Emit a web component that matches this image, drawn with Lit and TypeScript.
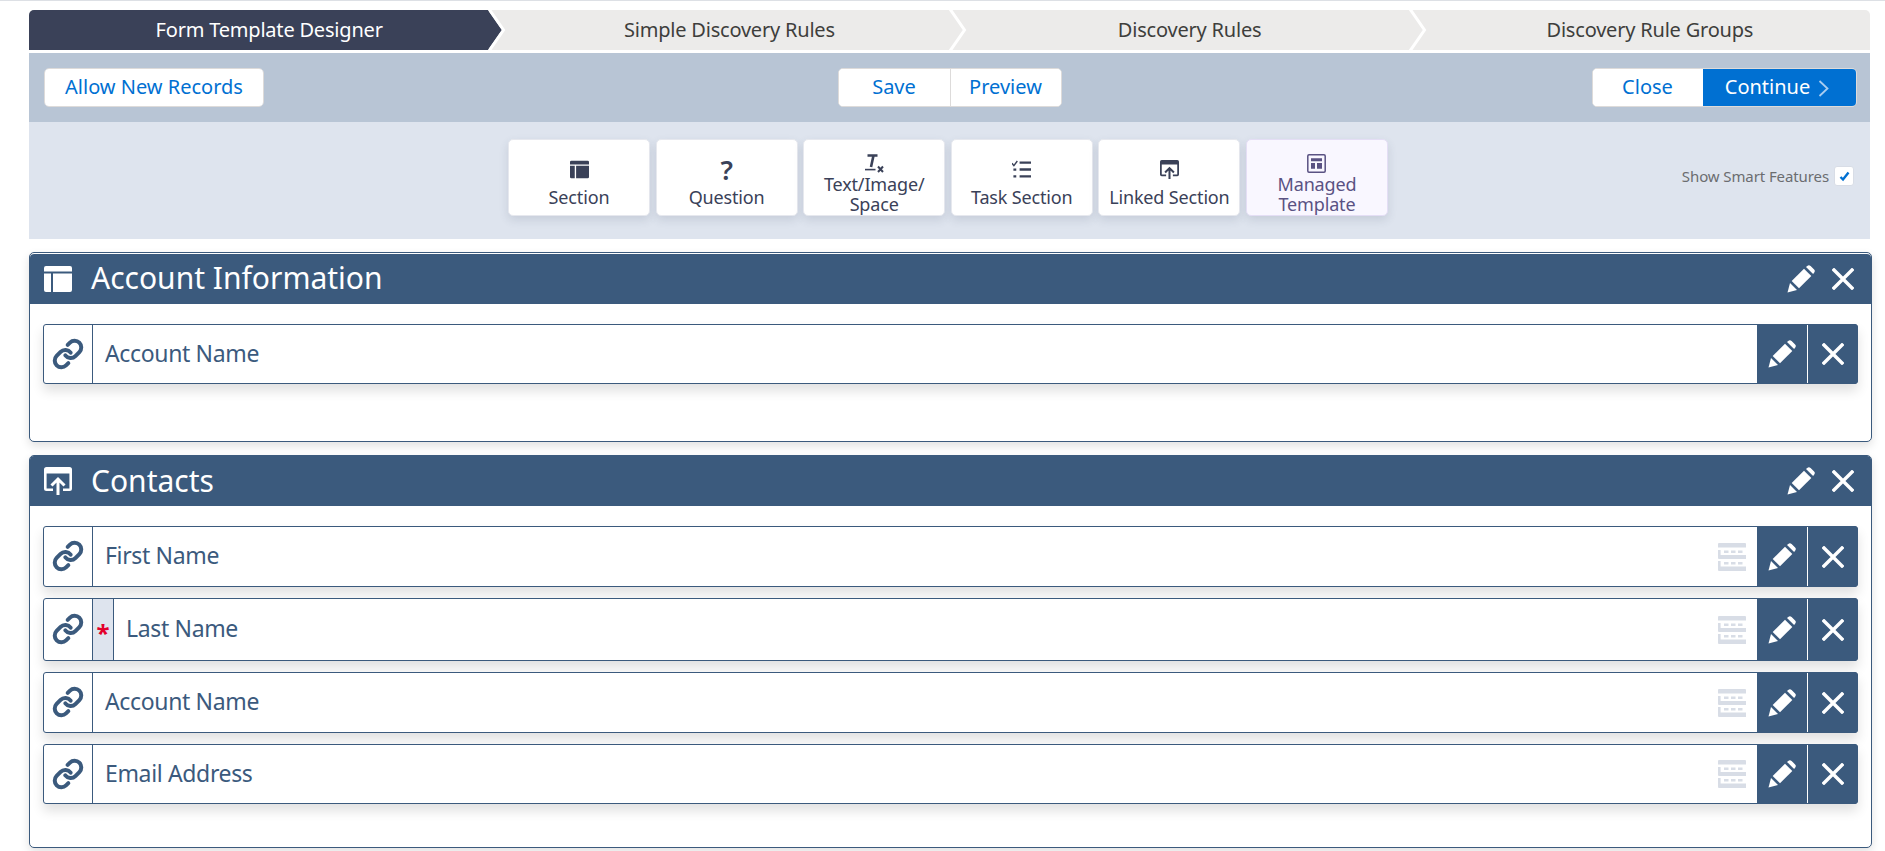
import { LitElement, html, css, svg } from "lit";
import { customElement } from "lit/decorators.js";

const sectionIcon = svg`<path d="M2 0h24a2 2 0 0 1 2 2v3.5H0V2a2 2 0 0 1 2-2zM0 7.5h7V26H2a2 2 0 0 1-2-2zM9 7.5h19V24a2 2 0 0 1-2 2H9z" fill="currentColor"/>`;
const linkedIcon = svg`<path d="M2.5 0h23A2.5 2.5 0 0 1 28 2.5v19a2.5 2.5 0 0 1-2.5 2.5H19v-2.6h6.4V6.5H2.6v14.9H9V24H2.5A2.5 2.5 0 0 1 0 21.5v-19A2.5 2.5 0 0 1 2.5 0z" fill="currentColor"/><path d="M14 28V12.5M7.5 18.5 14 12l6.5 6.5" fill="none" stroke="currentColor" stroke-width="3"/>`;

const pencil = html`<svg class="pencil" viewBox="0 0 28 28"><path d="M.5 27.5 3 18l7 7z" fill="currentColor"/><path d="M4.7 16 17 3.7 24.3 11 12 23.3z" fill="currentColor"/><path d="M19 1.9l1.2-1a2.6 2.6 0 0 1 3.4 0l3.5 3.5a2.6 2.6 0 0 1 0 3.4l-1 1.2z" fill="currentColor"/></svg>`;
const cross = html`<svg class="cross" viewBox="0 0 22 22"><path d="M2 2l18 18M20 2 2 20" stroke="currentColor" stroke-width="3.4" stroke-linecap="square" fill="none"/></svg>`;
const link = html`<svg class="link" viewBox="0 0 24 24"><path d="M10 13a5 5 0 0 0 7.54.54l3-3a5 5 0 0 0-7.07-7.07l-1.72 1.71" /><path d="M14 11a5 5 0 0 0-7.54-.54l-3 3a5 5 0 0 0 7.07 7.07l1.71-1.71"/></svg>`;
const tableIcon = html`<svg class="grid" viewBox="0 0 28 28"><path fill="currentColor" d="M1 0h26a1 1 0 0 1 1 1v3.5H0V1a1 1 0 0 1 1-1zM0 7h2.6v5H28v4H1a1 1 0 0 1-1-1zM0 18h2.6v5.5H28V28H1a1 1 0 0 1-1-1zM6 7.5h4.5v2.6H6zM13 7.5h4.5v2.6H13zM20 7.5h4.5v2.6H20zM6 19h4.5v2.6H6zM13 19h4.5v2.6H13zM20 19h4.5v2.6H20z"/></svg>`;
const chevron = html`<svg class="chev" viewBox="0 0 18 40" preserveAspectRatio="none"><path d="M1 -1 15.5 20 1 41" fill="none" stroke="#fff" stroke-width="3"/></svg>`;

const tiles = [
  { label: ["Section"], icon: html`<svg class="ti" viewBox="0 0 28 26">${sectionIcon}</svg>` },
  { label: ["Question"], icon: html`<span class="q">?</span>` },
  {
    label: ["Text/Image/", "Space"],
    icon: html`<svg class="ti" viewBox="0 0 19 19"><path d="M2.5 1.5h10M8.5 1.5 6 13" fill="none" stroke="currentColor" stroke-width="2.6"/><path d="M0 15.6h10.5" stroke="currentColor" stroke-width="1.6"/><path d="M13 12.5l5 5.5M18 12.5l-5 5.5" stroke="currentColor" stroke-width="2"/></svg>`,
  },
  {
    label: ["Task Section"],
    icon: html`<svg class="ti" viewBox="0 0 20 19"><path d="M0 3l2 2.4L5.6.6" fill="none" stroke="currentColor" stroke-width="1.5"/><path d="M8 2.2h12M8 9.5h12M8 16.7h12" stroke="currentColor" stroke-width="2.4"/><path d="M1.5 8.4h3v2.4h-3zM1.5 15.6h3V18h-3z" fill="currentColor"/></svg>`,
  },
  { label: ["Linked Section"], icon: html`<svg class="ti" viewBox="0 0 28 28">${linkedIcon}</svg>` },
  {
    label: ["Managed", "Template"],
    managed: true,
    icon: html`<svg class="ti" viewBox="0 0 19 19"><rect x=".8" y=".8" width="17.4" height="17.4" rx="1.2" fill="none" stroke="currentColor" stroke-width="1.5"/><path d="M4 4.2h11v3H4zM4 9h4v5.8H4zM10 9h5v5.8h-5z" fill="currentColor"/></svg>`,
  },
];

const tabs = ["Form Template Designer", "Simple Discovery Rules", "Discovery Rules", "Discovery Rule Groups"];

@customElement("app-root")
export class AppRoot extends LitElement {
  static styles = css`
    :host {
      display: block;
      width: 1885px;
      height: 851px;
      overflow: hidden;
      background: #fff;
      font-family: "Noto Sans", sans-serif;
      box-sizing: border-box;
      border-top: 1px solid #dde0e5;
    }
    * { box-sizing: border-box; }
    .page { padding: 9px 13px 0 29px; }
    .wrap { margin-right: 2px; }

    .tabs { display: flex; height: 40px; background: #ecebea; border-radius: 5px 5px 0 0; }
    .tab {
      position: relative;
      flex: 1 1 0;
      display: flex;
      align-items: center;
      justify-content: center;
      padding: 0 0 2px 20px;
      font-size: 20px;
      letter-spacing: -0.2px;
      color: #3e3e3c;
    }
    .tab.active { background: #3a4158; color: #fff; border-top-left-radius: 5px; }
    .chev { position: absolute; left: 100%; top: 0; width: 18px; height: 40px; margin-left: -1px; z-index: 1; }
    .tip { position: absolute; left: 100%; top: 0; width: 14px; height: 40px; margin-left: -1px; }

    .bar {
      margin-top: 3px;
      height: 69px;
      padding: 15px;
      background: #b8c5d5;
      display: grid;
      grid-template-columns: 1fr auto 1fr;
      align-items: start;
    }
    .group { display: inline-flex; border: 1px solid #dddbda; border-radius: 5px; overflow: hidden; background: #fff; height: 39px; }
    .group.right { justify-self: end; margin-right: -1.5px; }
    .btn {
      display: flex;
      align-items: center;
      justify-content: center;
      padding-bottom: 2px;
      font-size: 20px;
      color: #0070d2;
      background: #fff;
    }
    .btn + .btn { border-left: 1px solid #dddbda; }
    .allow { width: 218px; }
    .save { width: 111px; }
    .preview { width: 111px; }
    .close { width: 110px; }
    .continue { width: 153px; background: #0070d2; color: #fff; gap: 8px; padding-right: 4px; border-left: 0 !important; }
    .continue svg { width: 11px; height: 17px; margin-top: 4px; }

    .tools { height: 117px; background: #dee4ee; display: flex; align-items: flex-start; padding: 17px 16px 0 479px; }
    .tile-row { display: flex; gap: 5.6px; }
    .tile {
      width: 142px;
      height: 77px;
      padding-top: 12px;
      background: #fff;
      border: 1px solid #e6e8ee;
      border-radius: 5px;
      box-shadow: 0 4px 10px rgba(60, 70, 100, 0.14);
      color: #3a4158;
      display: flex;
      flex-direction: column;
      align-items: center;
      justify-content: center;
      font-size: 18px;
      line-height: 20px;
      letter-spacing: -0.15px;
      text-align: center;
    }
    .tile.managed { background: #f9f7ff; border-color: #e4def5; color: #5a5283; }
    .ti { width: 19px; height: 19px; display: block; margin-bottom: 8px; flex: none; }
    .q { display: block; width: 19px; height: 19px; line-height: 19px; font-size: 27px; font-weight: 600; margin-bottom: 8px; }
    .tile.two .ti { margin-bottom: 1px; }
    .smart { margin-left: auto; margin-top: 27px; display: flex; align-items: center; gap: 5px; font-size: 15px; letter-spacing: -0.1px; color: #6b6d70; height: 20px; }
    .check { width: 20px; height: 20px; background: #fff; border: 1px solid #d8dde6; border-radius: 3px; display: flex; align-items: center; justify-content: center; }
    .check svg { width: 11px; height: 11px; }

    .panel { margin-top: 13px; border: 1px solid #3b5a7d; border-radius: 5px; background: #fff; box-shadow: 0 4px 10px rgba(0, 0, 0, 0.12); }
    .panel.one { height: 190px; }
    .panel.two { height: 393px; }
    .head { height: 50px; background: #3b5a7d; color: #fff; display: flex; align-items: center; padding: 0 17px 0 14px; border-radius: 4px 4px 0 0; }
    .panel.one .head { margin-top: 1px; }
    .head .hi { width: 28px; height: 28px; margin-right: 19px; flex: none; }
    .head h2 { margin: 0 0 3px; flex: 1; font-weight: 400; font-size: 30px; line-height: 1; }
    .panel.two .head h2 { margin-bottom: 1px; }
    .head .pencil { margin-right: 17px; }
    .pencil { width: 28px; height: 28px; display: block; }
    .cross { width: 22px; height: 22px; display: block; }
    .body { padding: 20px 13px 0; display: flex; flex-direction: column; gap: 11px; }

    .row {
      display: flex;
      align-items: stretch;
      border: 1px solid #3b5a7d;
      border-radius: 3px;
      background: #fff;
      box-shadow: 0 7px 12px rgba(0, 0, 0, 0.12);
      color: #3b5a7d;
    }
    .lk { width: 49px; flex: none; border-right: 1px solid #3b5a7d; display: flex; align-items: center; justify-content: center; padding-bottom: 1px; }
    .link { width: 32px; height: 32px; fill: none; stroke: #3b5a7d; stroke-width: 3; stroke-linecap: round; stroke-linejoin: round; }
    .req { width: 21px; flex: none; background: #dee4ee; border-right: 1px solid #3b5a7d; color: #e3002b; font-weight: 700; font-size: 24px; display: flex; align-items: center; justify-content: center; padding-top: 5px; }
    .label { flex: 1; display: flex; align-items: center; padding: 0 0 3px 12px; font-size: 23px; letter-spacing: -0.35px; }
    .req + .label { padding-left: 12px; }
    .grid { width: 28px; height: 28px; margin-right: 11px; align-self: center; color: #d8dde6; flex: none; }
    .act { width: 50px; flex: none; background: #3b5a7d; color: #fff; display: flex; align-items: center; justify-content: center; margin: -1px 0; }
    .act + .act { margin-left: 1px; margin-right: -1px; border-radius: 0 4px 4px 0; }
  `;

  private renderRow(label: string, h: number, opts: { req?: boolean; grid?: boolean } = {}) {
    return html`<div class="row" style="height:${h}px">
      <div class="lk">${link}</div>
      ${opts.req ? html`<div class="req">*</div>` : ""}
      <div class="label">${label}</div>
      ${opts.grid ? tableIcon : ""}
      <div class="act">${pencil}</div>
      <div class="act">${cross}</div>
    </div>`;
  }

  render() {
    return html`<div class="page">
      <div class="wrap">
        <div class="tabs">
          ${tabs.map(
            (t, i) => html`<div class="tab ${i === 0 ? "active" : ""}">
              ${t}
              ${i === 0
                ? html`<svg class="tip" viewBox="0 0 14 40" preserveAspectRatio="none"><path d="M0 0 14 20 0 40z" fill="#3a4158"/></svg>`
                : ""}
              ${i < 3 ? chevron : ""}
            </div>`
          )}
        </div>
        <div class="bar">
          <div><div class="group"><div class="btn allow">Allow New Records</div></div></div>
          <div class="group"><div class="btn save">Save</div><div class="btn preview">Preview</div></div>
          <div class="group right">
            <div class="btn close">Close</div>
            <div class="btn continue">Continue
              <svg viewBox="0 0 11 17"><path d="M1.5 1 9.5 8.5 1.5 16" fill="none" stroke="#a9cdf0" stroke-width="1.8"/></svg>
            </div>
          </div>
        </div>
        <div class="tools">
          <div class="tile-row">
            ${tiles.map(
              (t) => html`<div class="tile ${t.label.length > 1 ? "two" : ""} ${t.managed ? "managed" : ""}">
                ${t.icon}${t.label.map((l) => html`<div>${l}</div>`)}
              </div>`
            )}
          </div>
          <div class="smart">
            <span>Show Smart Features</span>
            <span class="check"><svg viewBox="0 0 11 11"><path d="M1.5 6 4 8.5 9.5 1.5" fill="none" stroke="#0070d2" stroke-width="2.4"/></svg></span>
          </div>
        </div>
      </div>

      <div class="panel one">
        <div class="head">
          <svg class="hi" viewBox="0 0 28 26">${sectionIcon}</svg>
          <h2>Account Information</h2>
          ${pencil}${cross}
        </div>
        <div class="body">${this.renderRow("Account Name", 60)}</div>
      </div>

      <div class="panel two">
        <div class="head">
          <svg class="hi" viewBox="0 0 28 28">${linkedIcon}</svg>
          <h2>Contacts</h2>
          ${pencil}${cross}
        </div>
        <div class="body">
          ${this.renderRow("First Name", 61, { grid: true })}
          ${this.renderRow("Last Name", 63, { req: true, grid: true })}
          ${this.renderRow("Account Name", 61, { grid: true })}
          ${this.renderRow("Email Address", 60, { grid: true })}
        </div>
      </div>
    </div>`;
  }
}
